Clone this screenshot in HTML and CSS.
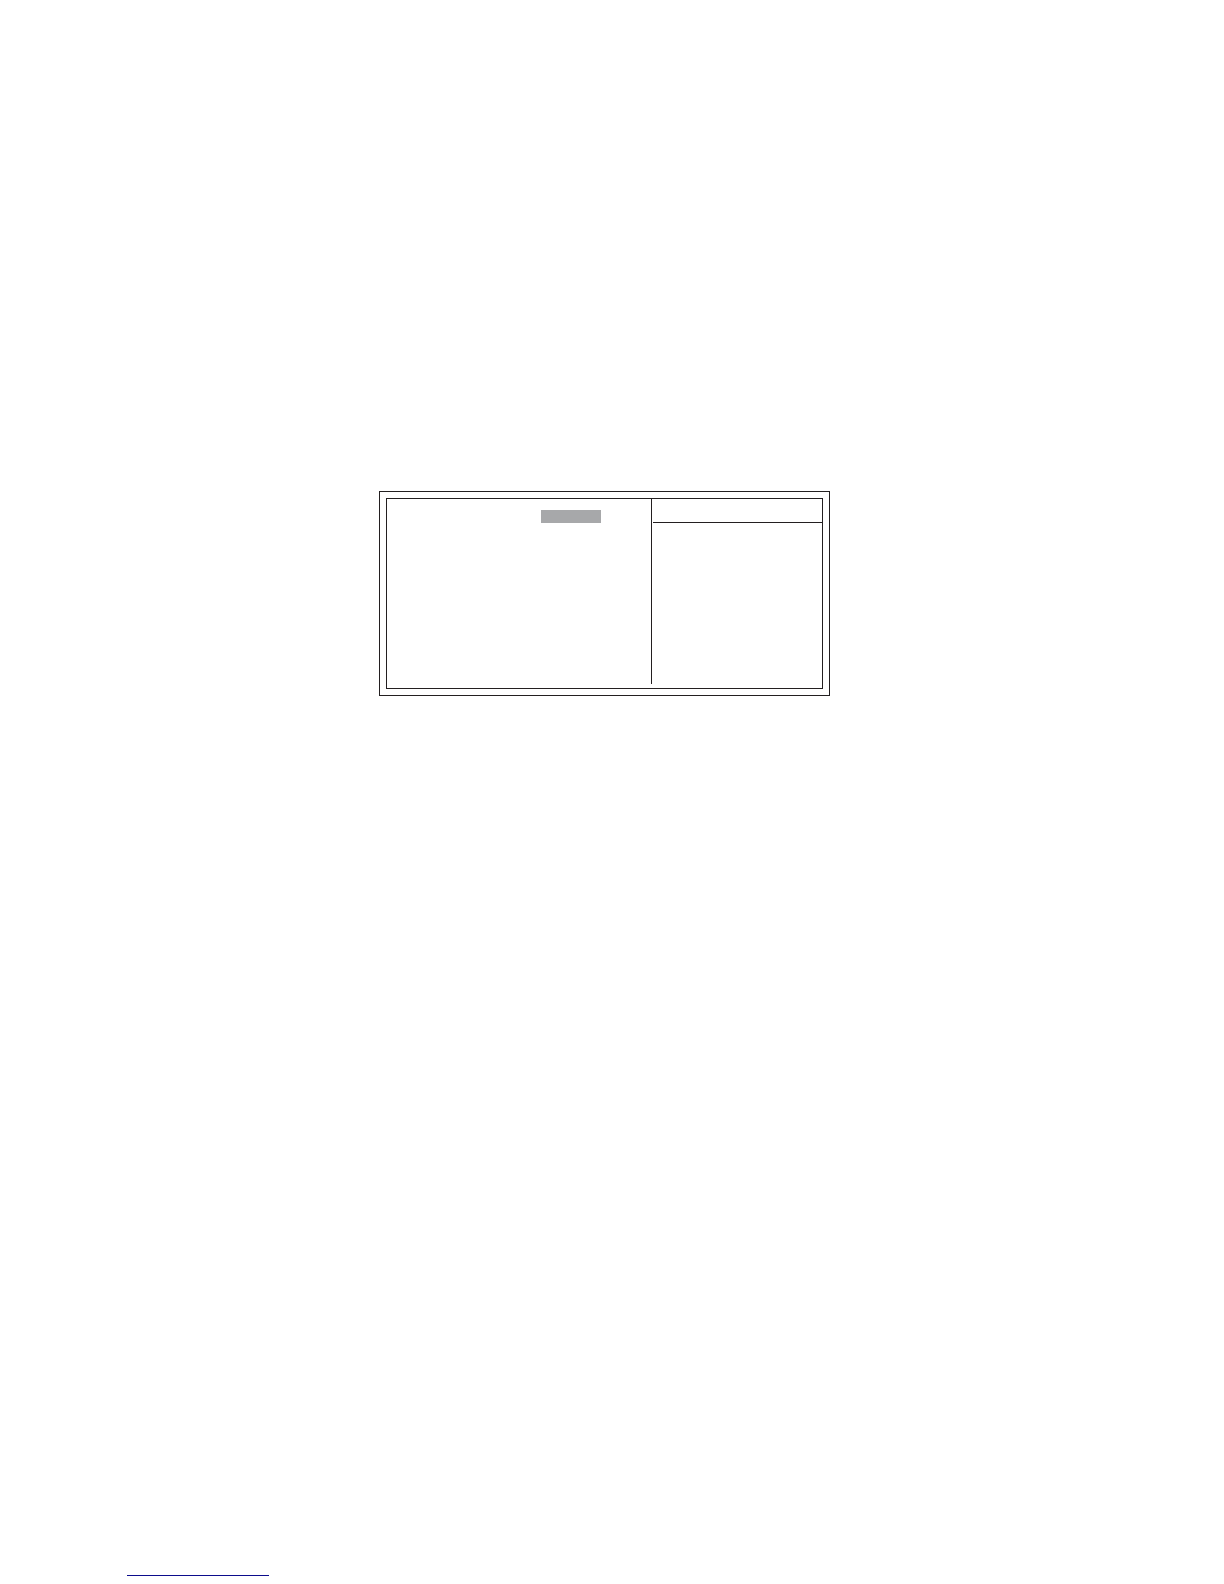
FILE: index.html
```html
<!doctype html>
<html lang="en">
<head>
    <meta charset="utf-8">
    <meta name="viewport" content="width=device-width, initial-scale=1">
    <title>Setup screen</title>
    <link rel="stylesheet" href="styles.css">
</head>
<body>
    <main>
        <div class="screen">
            <div class="panel">
                <section class="options">
                    <div class="selected"></div>
                </section>
                <aside class="help">
                    <div class="help-title"></div>
                </aside>
            </div>
        </div>
    </main>
    <footer>
        <a class="footer-link" href="#" aria-label="Back to top"></a>
    </footer>
</body>
</html>
```

FILE: styles.css
```css
* {
    box-sizing: border-box;
}

body {
    display: flex;
    flex-direction: column;
    min-height: 100vh;
    margin: 0;
    padding: 0 127px 8px;
    background: white;
    font: 14px/18px "Liberation Sans", sans-serif;
}

main {
    padding: 491px 0 40px 252px;
}

/* double frame */
.screen {
    max-width: 451px;
    padding: 6px;
    border: 1px solid #231f20;
}

.panel {
    display: grid;
    grid-template-columns: 265fr 170fr;
    min-height: 191px;
    padding-bottom: 4px;
    border: 1px solid #231f20;
}

.options {
    display: flex;
    justify-content: flex-end;
    padding: 11px 50px 0 0;
    border-right: 1px solid #231f20;
}

.selected {
    width: 60px;
    height: 13px;
    background: #a7a8aa;
}

.help {
    padding-left: 1px;
}

.help-title {
    height: 24px;
    border-bottom: 1px solid #231f20;
}

footer {
    margin-top: auto;
}

.footer-link {
    display: block;
    width: 142px;
    height: 18px;
    border-bottom: 1px solid #0c0c8c;
}
```
